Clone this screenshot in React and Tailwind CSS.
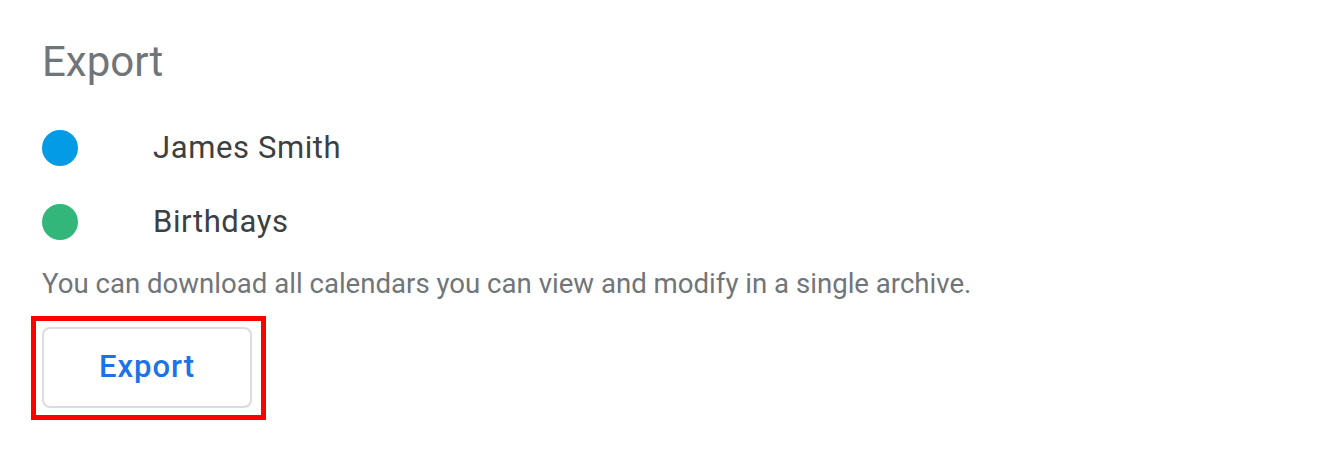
export default function App() {
  const calendars = [
    { name: 'James Smith', color: 'bg-[#039be5]' },
    { name: 'Birthdays', color: 'bg-[#33b679]' },
  ];

  return (
    <div className="w-[1344px] h-[464px] bg-white pl-[42px] pt-[38px] font-['Roboto',sans-serif]">
      <h1 className="text-[42px] leading-[48px] text-[#70757a] font-normal">Export</h1>

      <div className="mt-[44px] flex flex-col gap-[38px]">
        {calendars.map(c => (
          <div key={c.name} className="flex items-center h-[36px]">
            <span className={`w-[36px] h-[36px] rounded-full ${c.color}`}></span>
            <span className="ml-[75px] text-[31px] tracking-[0.6px] text-[#3c4043]">{c.name}</span>
          </div>
        ))}
      </div>

      <p className="mt-[28px] text-[27.6px] leading-[32px] text-[#70757a]">
        You can download all calendars you can view and modify in a single archive.
      </p>

      {/* highlighted button */}
      <div className="mt-[16px] -ml-[11px] w-[235px] h-[104px] border-[5px] border-[#ff0000] pl-[6px] pt-[6px]">
        <button className="w-[210px] h-[81px] rounded-[8px] border-2 border-[#dadce0] bg-white text-[31px] tracking-[1px] font-medium text-[#1a73e8]">
          Export
        </button>
      </div>
    </div>
  );
}
